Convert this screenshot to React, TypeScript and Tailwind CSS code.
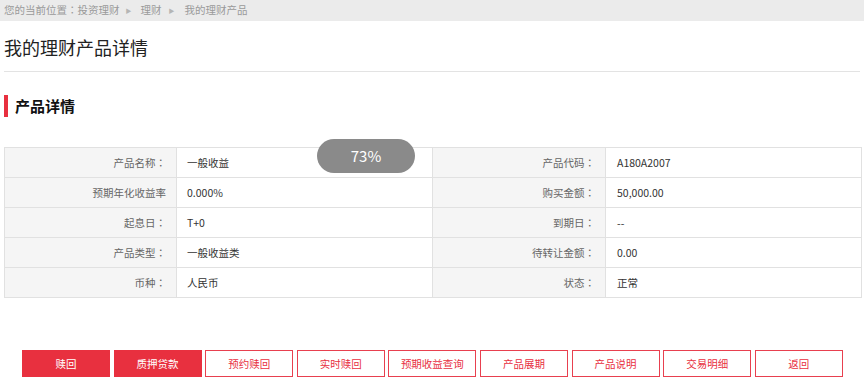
import React from "react";

const rows: [string, string, string, string][] = [
  ["产品名称：", "一般收益", "产品代码：", "A180A2007"],
  ["预期年化收益率", "0.000%", "购买金额：", "50,000.00"],
  ["起息日：", "T+0", "到期日：", "--"],
  ["产品类型：", "一般收益类", "待转让金额：", "0.00"],
  ["币种：", "人民币", "状态：", "正常"],
];

const buttons = ["赎回", "质押贷款", "预约赎回", "实时赎回", "预期收益查询", "产品展期", "产品说明", "交易明细", "返回"];

function Label({ text }: { text: string }) {
  if (text.endsWith("：")) {
    return (
      <>
        {text.slice(0, -1)}
        <span style={{ fontFamily: '"Noto Sans CJK TC", sans-serif' }}>：</span>
      </>
    );
  }
  return <>{text}</>;
}

export default function App() {
  return (
    <div
      className="relative w-[864px] h-[381px] bg-white overflow-hidden [text-spacing-trim:space-all]"
      style={{ fontFamily: '"Noto Sans CJK SC", "Noto Sans", "Liberation Sans", sans-serif' }}
    >
      <div className="h-[21px] bg-[#ebebeb] flex items-center pl-[4px] text-[10.5px] text-[#9a9a9a] leading-none">
        <span>
          您的当前位置<span style={{ fontFamily: '"Noto Sans CJK TC", sans-serif' }}>：</span>投资理财
        </span>
        <span className="ml-[6px] mr-[9px] text-[6px] text-[#b5b5b5]">▶</span>
        <span>理财</span>
        <span className="ml-[7px] mr-[10px] text-[6px] text-[#b5b5b5]">▶</span>
        <span>我的理财产品</span>
      </div>
      <div className="px-[4px]">
        <div className="h-[51px] flex items-center border-b border-[#e3e3e3] text-[18px] text-[#222] pt-[3px]">
          我的理财产品详情
        </div>
        <div className="mt-[23px] flex items-center h-[22px]">
          <div className="w-[4px] h-[22px] bg-[#e8303f]" />
          <div className="ml-[7px] text-[15px] font-bold text-[#111]">产品详情</div>
        </div>
        <table className="mt-[30px] w-[857px] border-collapse text-[10.5px] table-fixed">
          <colgroup>
            <col className="w-[172px]" />
            <col className="w-[256px]" />
            <col className="w-[173px]" />
            <col className="w-[256px]" />
          </colgroup>
          <tbody>
            {rows.map((r, i) => (
              <tr key={i} className="h-[30px]">
                <td className="border border-[#e1e1e1] bg-[#f5f5f5] text-right pr-[10px] text-[#666]">
                  <Label text={r[0]} />
                </td>
                <td className="border border-[#e1e1e1] pl-[10px] text-[#333]">{r[1]}</td>
                <td className="border border-[#e1e1e1] bg-[#f5f5f5] text-right pr-[10px] text-[#666]">
                  <Label text={r[2]} />
                </td>
                <td className="border border-[#e1e1e1] pl-[11px] text-[#333]">{r[3]}</td>
              </tr>
            ))}
          </tbody>
        </table>
      </div>
      <div className="mt-[52px] pl-[22px] flex gap-[3.6px]">
        {buttons.map((b, i) => (
          <div
            key={b}
            className={
              i < 2
                ? "w-[88px] h-[27px] flex items-center justify-center text-[10.5px] bg-[#e8303f] text-white border border-[#e8303f]"
                : "w-[88px] h-[27px] flex items-center justify-center text-[10.5px] bg-white text-[#e8303f] border border-[#e8404f]"
            }
          >
            {b}
          </div>
        ))}
      </div>
      <div className="absolute left-[317px] top-[139px] w-[98px] h-[34px] rounded-full bg-[#8a8a8a] text-white text-[15px] flex items-center justify-center">
        73%
      </div>
    </div>
  );
}
